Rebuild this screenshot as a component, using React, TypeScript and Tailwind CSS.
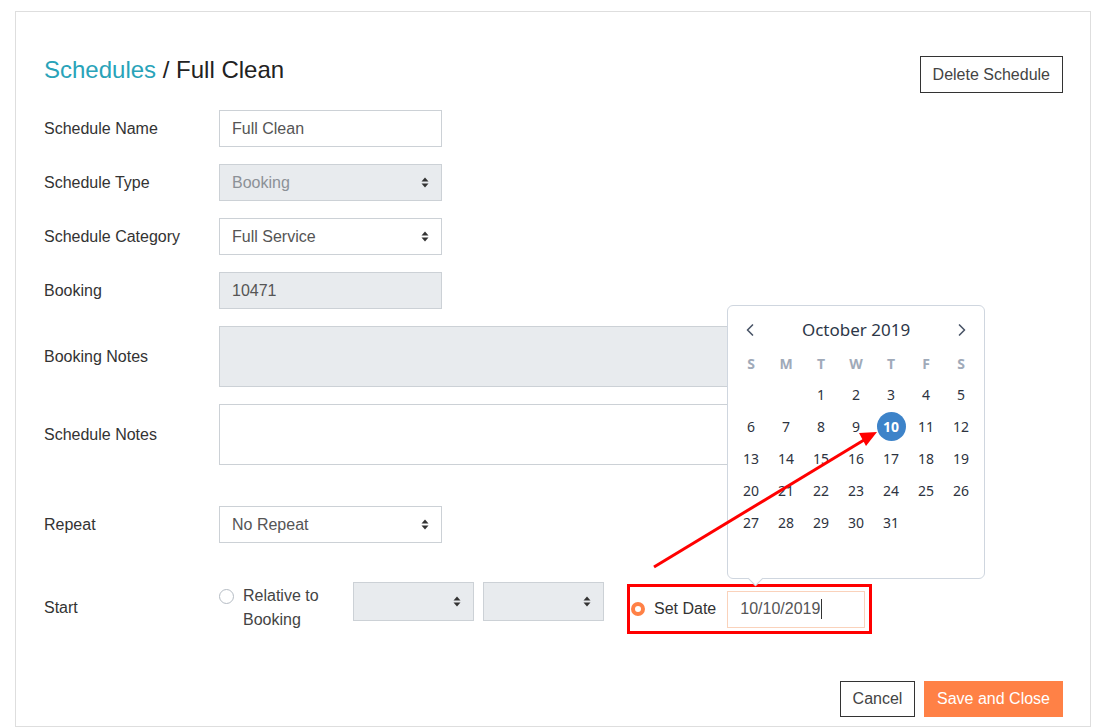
import { ChevronLeft, ChevronRight } from "lucide-react"

const SortArrows = () => (
  <svg width="8" height="11" viewBox="0 0 8 11" className="shrink-0">
    <path d="M4 0.5 L7.5 4.5 H0.5 Z" fill="#333" />
    <path d="M4 10.5 L7.5 6.5 H0.5 Z" fill="#333" />
  </svg>
)

function Select({ value, disabled, className = "" }: { value?: string; disabled?: boolean; className?: string }) {
  return (
    <div
      className={`flex items-center justify-between border border-[#ccd1d6] pl-3 pr-[12px] text-[16px] ${
        disabled ? "bg-[#e8ebee] text-[#8c9197]" : "bg-white text-[#555]"
      } ${className}`}
    >
      <span>{value}</span>
      <SortArrows />
    </div>
  )
}

function Row({ label, children, className = "" }: { label: string; children: React.ReactNode; className?: string }) {
  return (
    <div className={`flex items-center ${className}`}>
      <div className="w-[175px] shrink-0 text-[16px] text-[#333]">{label}</div>
      {children}
    </div>
  )
}

const weekdays = ["S", "M", "T", "W", "T", "F", "S"]
const days: (number | null)[] = [null, null, ...Array.from({ length: 31 }, (_, i) => i + 1)]

function Calendar() {
  return (
    <div className="absolute left-[727px] top-[305px] w-[258px] h-[274px] rounded-[6px] border border-[#cfd6df] bg-white font-['Noto_Sans',sans-serif]">
      <div className="flex items-center justify-between px-[12px] h-[47px]">
        <ChevronLeft size={20} color="#4a5568" strokeWidth={2} />
        <span className="text-[17px] text-[#2d3748]">October 2019</span>
        <ChevronRight size={20} color="#4a5568" strokeWidth={2} />
      </div>
      <div className="grid grid-cols-[repeat(7,35px)] justify-center -mt-[2px]">
        {weekdays.map((d, i) => (
          <div key={i} className="h-[24px] flex items-center justify-center text-[14px] font-bold text-[#a0aab9]">
            {d}
          </div>
        ))}
      </div>
      <div className="grid grid-cols-[repeat(7,35px)] justify-center mt-[3px]">
        {days.map((d, i) => (
          <div key={i} className="h-[32px] flex items-center justify-center text-[14px] text-[#2d3340]">
            {d === 10 ? (
              <span className="w-[29px] h-[29px] rounded-full bg-[#3d83c9] text-white font-bold flex items-center justify-center">
                10
              </span>
            ) : (
              d
            )}
          </div>
        ))}
      </div>
      <div className="absolute left-[22px] bottom-[-6px] w-[11px] h-[11px] rotate-45 bg-white border-r border-b border-[#cfd6df]" />
    </div>
  )
}

function Arrow() {
  return (
    <svg className="absolute left-0 top-0 pointer-events-none" width="1100" height="728">
      <line x1="654" y1="567" x2="864" y2="440" stroke="#f00" strokeWidth="3" />
      <path d="M877 432 L859 433 L866 446 Z" fill="#f00" />
    </svg>
  )
}

export default function App() {
  return (
    <div className="relative w-[1100px] h-[728px] bg-white font-['Liberation_Sans',Arial,sans-serif] overflow-hidden">
      <div className="ml-[15px] mt-[11px] w-[1076px] h-[716px] border border-[#dedede] pl-[28px] pr-[27px]">
        <div className="flex items-start justify-between pt-[44px]">
          <h1 className="text-[24px] leading-[28px] text-[#222]">
            <span className="text-[#29a3b9]">Schedules</span> / Full Clean
          </h1>
          <button className="h-[37px] px-3 border border-[#333] text-[16px] text-[#444] bg-white">
            Delete Schedule
          </button>
        </div>

        <div className="flex flex-col gap-[17px] mt-[17px]">
          <Row label="Schedule Name">
            <div className="w-[223px] h-[37px] border border-[#ccd1d6] flex items-center pl-3 text-[16px] text-[#555]">
              Full Clean
            </div>
          </Row>
          <Row label="Schedule Type">
            <Select value="Booking" disabled className="w-[223px] h-[37px]" />
          </Row>
          <Row label="Schedule Category">
            <Select value="Full Service" className="w-[223px] h-[37px]" />
          </Row>
          <Row label="Booking">
            <div className="w-[223px] h-[37px] border border-[#ccd1d6] bg-[#e8ebee] flex items-center pl-3 text-[16px] text-[#555]">
              10471
            </div>
          </Row>
          <Row label="Booking Notes">
            <div className="w-[560px] h-[61px] border border-[#ccd1d6] bg-[#e8ebee]" />
          </Row>
          <Row label="Schedule Notes">
            <div className="w-[560px] h-[61px] border border-[#ccd1d6] bg-white" />
          </Row>
        </div>

        <Row label="Repeat" className="mt-[41px]">
          <Select value="No Repeat" className="w-[223px] h-[37px]" />
        </Row>

        <div className="flex items-start mt-[39px]">
          <div className="w-[175px] h-[51px] flex items-center text-[16px] text-[#333]">Start</div>
          <div className="flex items-start w-[134px] text-[16px] text-[#444] leading-[24px] pt-[2px]">
            <span className="mt-[5px] w-[15px] h-[15px] rounded-full border border-[#b5bcc4] bg-white shrink-0" />
            <span className="ml-[9px]">
              Relative to
              <br />
              Booking
            </span>
          </div>
          <Select className="w-[121px] h-[39px]" disabled />
          <Select className="w-[121px] h-[39px] ml-[9px]" disabled />
          <div className="ml-[23px] mt-[2px] w-[245px] h-[50px] border-[3px] border-[#f00] flex items-center">
            <span className="ml-[1px] w-[14px] h-[14px] rounded-full border-[4px] border-[#ff8146] bg-white shrink-0" />
            <span className="ml-[9px] text-[16px] text-[#333]">Set Date</span>
            <div className="ml-[11px] w-[138px] h-[37px] border border-[#fad2bb] flex items-center pl-3 text-[16px] text-[#555]">
              10/10/2019
              <span className="w-px h-[20px] bg-[#333] ml-[1px]" />
            </div>
          </div>
        </div>

        <div className="flex justify-end gap-[9px] mt-[47px]">
          <button className="h-[36px] w-[75px] border border-[#333] text-[16px] text-[#444] bg-white">Cancel</button>
          <button className="h-[36px] w-[139px] bg-[#ff8146] text-[16px] text-white">Save and Close</button>
        </div>
      </div>

      <Calendar />
      <Arrow />
    </div>
  )
}
